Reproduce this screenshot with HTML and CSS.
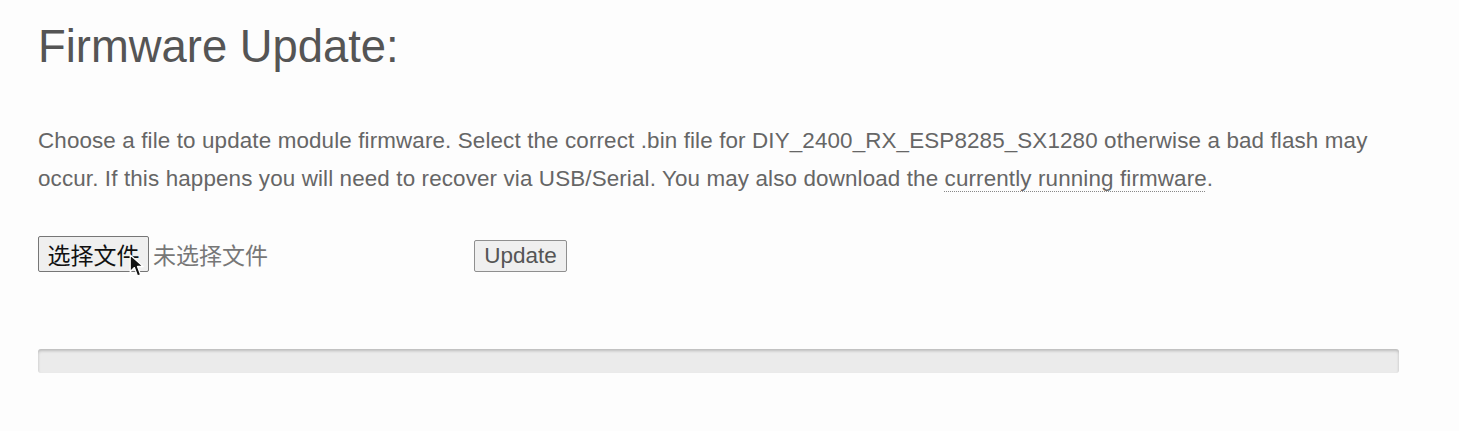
FILE: index.html
```html
<!DOCTYPE html>
<html>
<head>
<meta charset="utf-8">
<link rel="stylesheet" href="styles.css">
</head>
<body>
<main class="page">
  <h1 class="title">Firmware Update:</h1>
  <p class="desc">Choose a file to update module firmware. Select the correct .bin file for DIY_2400_RX_ESP8285_SX1280 otherwise a bad flash may occur. If this happens you will need to recover via USB/Serial. You may also download the <a class="link" href="#">currently running firmware</a>.</p>
  <form class="upload">
    <div class="file">
      <span class="file-btn">选择文件</span>
      <span class="file-name">未选择文件</span>
      <svg class="cursor" width="17" height="25" viewBox="0 0 16 24"><path d="M1 1 L1 17 L5 13 L8 21 L11 20 L8 12 L13.5 12 Z" fill="#111" stroke="#fff" stroke-width="1.2" stroke-linejoin="round"/></svg>
    </div>
    <button class="update" type="button">Update</button>
  </form>
  <div class="progress"></div>
</main>
</body>
</html>
```
FILE: styles.css
```css
html, body {
  margin: 0;
  background: #fdfdfd;
}
.page {
  width: 1361px;
  padding: 22px 0 0 38px;
  font-family: "Liberation Sans", Arial, sans-serif;
  color: #666;
}
.title {
  margin: 0;
  font-size: 45.4px;
  font-weight: normal;
  line-height: 50px;
  color: #555;
}
.desc {
  margin: 50px 0 0;
  font-size: 22.4px;
  letter-spacing: 0.13px;
  line-height: 38px;
}
.link {
  color: #666;
  text-decoration: underline dotted #888;
  text-decoration-thickness: 1px;
  text-underline-offset: 5px;
}
.upload {
  display: flex;
  align-items: flex-end;
  margin-top: 38px;
  height: 36px;
}
.file {
  position: relative;
  display: flex;
  align-items: center;
  width: 436px;
  font-family: "Liberation Sans", "Noto Sans CJK SC", sans-serif;
}
.file-btn {
  box-sizing: border-box;
  height: 36px;
  width: 111px;
  display: flex;
  align-items: center;
  justify-content: center;
  font-family: "Noto Sans CJK SC", sans-serif;
  font-size: 23px;
  color: #111;
  background: #efefef;
  border: 1px solid #767676;
  border-radius: 2px;
}
.file-name {
  margin-left: 4px;
  font-family: "Noto Sans CJK SC", sans-serif;
  font-size: 23px;
  color: #777;
}
.cursor {
  position: absolute;
  left: 91px;
  top: 18px;
}
.update {
  box-sizing: border-box;
  height: 32px;
  width: 93px;
  padding: 0;
  font-family: "Liberation Sans", Arial, sans-serif;
  font-size: 22.5px;
  color: #555;
  background: #efefef;
  border: 1px solid #8f8f8f;
  border-radius: 2px;
}
.progress {
  margin-top: 77px;
  height: 24px;
  width: 1361px;
  background: #ebebeb;
  border-radius: 3px;
  box-shadow: inset 0 2px 3px rgba(0,0,0,0.2);
}
```
